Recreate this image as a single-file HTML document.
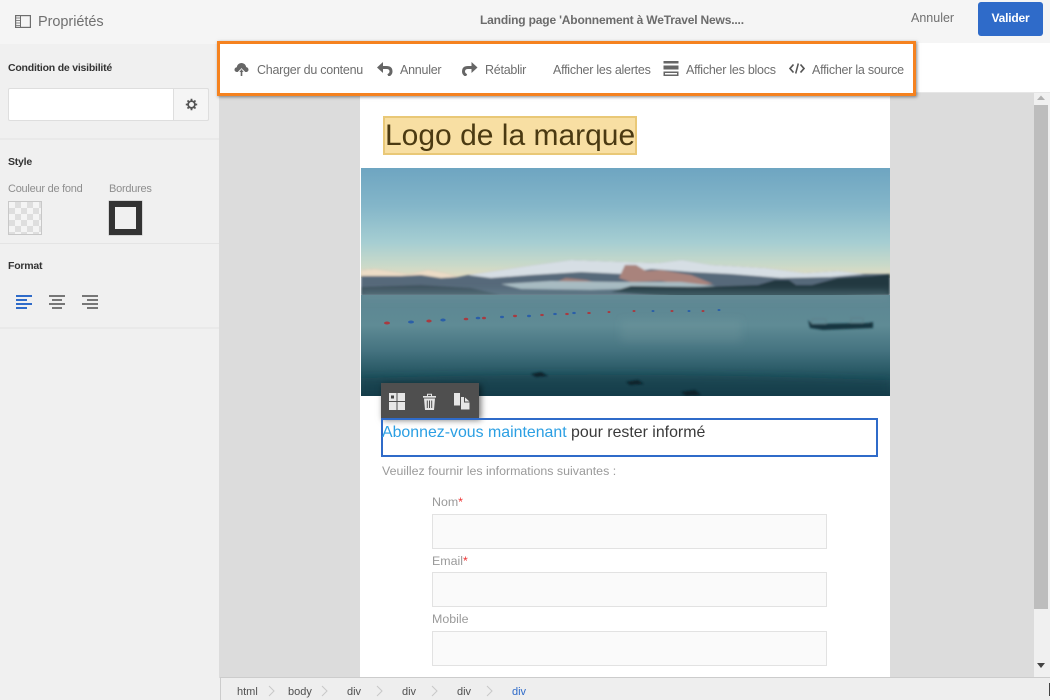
<!DOCTYPE html>
<html lang="fr"><head><meta charset="utf-8"><title>Propriétés</title>
<style>
*{box-sizing:border-box}
html,body{margin:0;padding:0;width:1050px;height:700px;overflow:hidden;background:#f0f0f0;font-family:"Liberation Sans",sans-serif}
.a{position:absolute;white-space:nowrap}
.t{font-size:12.5px;letter-spacing:-.25px;color:#6e6e6e;line-height:16px}
.b{font-weight:bold;font-size:10.5px;color:#333;letter-spacing:-.22px;line-height:14px}
.s{font-size:11px;color:#8e8e8e;letter-spacing:-.25px;line-height:14px}
.f{font-size:12.4px;color:#9a9a9a;line-height:16px}
.inp{position:absolute;left:432px;width:395px;height:35px;background:#fafafa;border:1px solid #e2e2e2}
.bc{position:absolute;top:685px;font-size:11px;color:#505050;line-height:14px}
.ch{position:absolute;top:685px;width:7px;height:12px}
svg{position:absolute;display:block}
</style></head><body>

<div class="a" style="left:0;top:0;width:1050px;height:44px;background:#f5f5f5"></div>
<div class="a" style="left:220px;top:43px;width:830px;height:50px;background:#fff;border-bottom:1px solid #e6e6e6"></div>
<div class="a" style="left:0;top:44px;width:219px;height:656px;background:#f0f0f0"></div>
<div class="a" style="left:219px;top:93px;width:831px;height:585px;background:#dcdcdc"></div>

<svg style="left:15px;top:15px" width="16" height="13" viewBox="0 0 16 13"><rect x=".6" y=".6" width="14.800" height="11.800" fill="none" stroke="#6e6e6e" stroke-width="1.200"/><path d="M1 3h4M1 5.500h4M1 8h4M1 10.500h4" stroke="#8a8a8a"/><path d="M5.500 1v11" stroke="#6e6e6e"/></svg>
<div class="a" style="left:38px;top:13px;font-size:14.5px;color:#707070;line-height:18px;letter-spacing:-.05px">Propriétés</div>
<div class="a" style="left:480px;top:12px;font-size:12px;font-weight:bold;color:#6b6b6b;line-height:16px;letter-spacing:-.17px">Landing page 'Abonnement à WeTravel News....</div>
<div class="a" style="left:911px;top:10px;font-size:12.5px;color:#707070;line-height:16px">Annuler</div>
<div class="a" style="left:978px;top:2px;width:65px;height:34px;background:#2f6bc9;border-radius:3px;color:#fff;font-size:12px;font-weight:bold;text-align:center;line-height:33px;letter-spacing:-.2px">Valider</div>

<div class="a b" style="left:8px;top:61px">Condition de visibilité</div>
<div class="a" style="left:8px;top:88px;width:201px;height:33px;background:#fff;border:1px solid #dedede;border-radius:2px"></div>
<div class="a" style="left:173px;top:88px;width:36px;height:33px;background:#f5f5f5;border:1px solid #dedede;border-radius:0 2px 2px 0"></div>
<svg style="left:185px;top:98px" width="13" height="13" viewBox="0 0 13 13"><circle cx="6.500" cy="6.500" r="3.400" fill="none" stroke="#555" stroke-width="1.800"/><g stroke="#555" stroke-width="1.800"><path d="M6.500 .8V3M6.500 10v2.200M.8 6.500H3M10 6.500h2.200M2.500 2.500L4 4M9 9l1.500 1.500M2.500 10.500L4 9M9 4l1.500-1.500"/></g></svg>
<div class="a" style="left:0;top:138px;width:219px;height:2px;background:#e9e9e9"></div>
<div class="a b" style="left:8px;top:155px">Style</div>
<div class="a s" style="left:8px;top:182px">Couleur de fond</div>
<div class="a s" style="left:109px;top:182px">Bordures</div>
<div class="a" style="left:8px;top:201px;width:34px;height:34px;border:1px solid #c8c8c8;background-color:#f4f4f4;background-image:conic-gradient(#dedede 25%,#f4f4f4 0 50%,#dedede 0 75%,#f4f4f4 0);background-size:12px 12px"></div>
<div class="a" style="left:109px;top:201px;width:33px;height:34px;border:6px solid #333;background:#f0f0f0;box-shadow:0 0 0 .5px #bbb"></div>
<div class="a" style="left:0;top:243px;width:219px;height:1px;background:#e4e4e4"></div>
<div class="a b" style="left:8px;top:259px">Format</div>
<svg style="left:16px;top:294px" width="85" height="15" viewBox="0 0 85 15"><g stroke="#2f6bc9" stroke-width="2"><path d="M0 2H16M0 6H11M0 10H16M0 14H11"/></g><g stroke="#777" stroke-width="2"><path d="M33 2H49M36 6H46M33 10H49M36 14H46M66 2H82M71 6H82M66 10H82M71 14H82"/></g></svg>
<div class="a" style="left:0;top:327px;width:219px;height:2px;background:#e9e9e9"></div>

<div class="a" style="left:360px;top:93px;width:530px;height:585px;background:#fff"></div>
<div class="a" style="left:383px;top:116px;width:254px;height:39px;background:#f8dfa3;border:2px solid #e9c877"></div>
<div class="a" style="left:385px;top:118px;font-size:30px;line-height:36px;color:#4b3a12">Logo de la marque</div>

<svg style="left:361px;top:168px" width="529" height="228" viewBox="0 0 529 228" preserveAspectRatio="none">
<defs>
<linearGradient id="sky" x1="0" y1="0" x2="0" y2="1"><stop offset="0" stop-color="#6ea5c1"/><stop offset=".35" stop-color="#84b6c9"/><stop offset=".68" stop-color="#a6ced2"/><stop offset=".88" stop-color="#c9d9c9"/><stop offset="1" stop-color="#e5dcc0"/></linearGradient>
<linearGradient id="wat" x1="0" y1="0" x2="0" y2="1"><stop offset="0" stop-color="#5d8692"/><stop offset=".3" stop-color="#5f8b95"/><stop offset=".55" stop-color="#457380"/><stop offset=".8" stop-color="#22535f"/><stop offset="1" stop-color="#103c4a"/></linearGradient>
<filter id="bl" x="-5%" y="-5%" width="110%" height="110%"><feGaussianBlur stdDeviation="1"/></filter>
<filter id="bl2" x="-5%" y="-30%" width="110%" height="160%"><feGaussianBlur stdDeviation="4"/></filter>
</defs>
<rect width="529" height="110" fill="url(#sky)"/>
<g filter="url(#bl)">
<path d="M0 102L14 101 34 104 48 106 67 102 84 105 97 109 107 107 173 97 210 92 264 94 297 95 321 92 351 97 404 100 444 105 477 103 504 106 529 106V128H0Z" fill="#56697a"/>
<path d="M0 102L14 101 34 104 48 106 67 102 84 105 97 109 80 110 60 107 40 108 0 108Z" fill="#ecdcc6"/>
<path d="M107 107L173 97 210 92 264 94 297 95 321 92 351 97 404 100 444 105 477 103 504 106 470 109 420 110 370 106 330 104 290 101 262 106 220 104 170 107 130 110Z" fill="#d6dee4"/>
<path d="M264 97L275 97 285 103 300 102 330 107 352 116 330 118 300 113 270 114 258 110Z" fill="#a9837c"/>
<path d="M205 110L225 112 245 117 210 117 195 114Z" fill="#a07e78"/>
<path d="M0 119L60 117 110 120 140 127H0Z" fill="#41525f"/>
<path d="M140 116L190 113 260 114 320 114 355 118 300 120 230 122 160 121Z" fill="#a9bcc3"/>
<path d="M250 124L270 118 340 119 397 117 414 112 428 112 435 117 451 117 477 110 510 108 529 106V127L440 130 330 130Z" fill="#24373f"/>
</g>
<rect y="127" width="529" height="101" fill="url(#wat)"/>
<g filter="url(#bl2)">
<rect x="0" y="124" width="529" height="7" fill="#6d8f98" opacity=".6"/>
<rect x="260" y="152" width="120" height="22" fill="#8fa8a8" opacity=".15"/>
<path d="M0 210Q260 202 529 212V228H0Z" fill="#0f3947" opacity=".45"/>
</g>
<g filter="url(#bl)">
<path d="M170 206l10-2 7 4-12 1ZM265 214l12-2 6 4-14 1ZM320 224l14-2 6 5-15 1Z" fill="#08212a"/>
<path d="M447 152l4 4 56-1 5-1 0 6-50 2-13-2Z" fill="#183540"/>
<path d="M451 151h14v5h-14ZM490 150h12v5h-12Z" fill="none" stroke="#5c7d86" stroke-width=".8"/>
</g>
<g>
<ellipse cx="26" cy="155" rx="3" ry="1.500" fill="#a83a40"/><ellipse cx="50" cy="154" rx="3" ry="1.500" fill="#2a5fa8"/><ellipse cx="68" cy="153" rx="2.700" ry="1.500" fill="#a83a40"/><ellipse cx="82" cy="152" rx="2.700" ry="1.500" fill="#2a5fa8"/><ellipse cx="105" cy="151" rx="2.300" ry="1.300" fill="#a83a40"/><ellipse cx="117" cy="150" rx="2.300" ry="1.300" fill="#2a5fa8"/><ellipse cx="123" cy="150" rx="2" ry="1.300" fill="#a83a40"/><ellipse cx="141" cy="149" rx="2" ry="1.200" fill="#2a5fa8"/><ellipse cx="154" cy="148" rx="2" ry="1.200" fill="#a83a40"/><ellipse cx="168" cy="148" rx="2" ry="1.200" fill="#2a5fa8"/><ellipse cx="181" cy="147" rx="1.800" ry="1.100" fill="#a83a40"/><ellipse cx="194" cy="146" rx="1.800" ry="1.100" fill="#2a5fa8"/><ellipse cx="206" cy="146" rx="1.800" ry="1.100" fill="#a83a40"/><ellipse cx="213" cy="145" rx="1.800" ry="1.100" fill="#2a5fa8"/><ellipse cx="228" cy="145" rx="1.800" ry="1" fill="#a83a40"/><ellipse cx="248" cy="144" rx="1.500" ry="1" fill="#a83a40"/><ellipse cx="273" cy="143" rx="1.500" ry="1" fill="#a83a40"/><ellipse cx="292" cy="143" rx="1.500" ry="1" fill="#2a5fa8"/><ellipse cx="311" cy="143" rx="1.500" ry="1" fill="#a83a40"/><ellipse cx="328" cy="143" rx="1.500" ry="1" fill="#2a5fa8"/><ellipse cx="342" cy="143" rx="1.500" ry="1" fill="#a83a40"/><ellipse cx="358" cy="142" rx="1.500" ry="1" fill="#2a5fa8"/>
</g>
</svg>

<div class="a" style="left:381px;top:383px;width:98px;height:35px;background:#4f4f4f;box-shadow:2px 2px 6px rgba(0,0,0,.55)"></div>
<svg style="left:389px;top:393px" width="16" height="17" viewBox="0 0 16 17"><path d="M0 0h7.500v8H0ZM8.500 0H16v8H8.500ZM0 9h7.500v8H0ZM8.500 9H16v8H8.500Z" fill="#e6e6e6"/><rect x="2" y="2.500" width="3" height="3" fill="#444"/></svg>
<svg style="left:422px;top:393px" width="15" height="17" viewBox="0 0 15 17"><path d="M1 3h13v1.600H1ZM5 3V.8h5V3h-1V1.800H6V3ZM2 5.500h11L12 17H3Z" fill="#e6e6e6"/><path d="M5.300 7.500v7.500M7.500 7.500v7.500M9.700 7.500v7.500" stroke="#4f4f4f"/></svg>
<svg style="left:454px;top:393px" width="16" height="17" viewBox="0 0 16 17"><path d="M0 0h6v12.500H0ZM7 4h3.500L15.500 8.500V16.500H7Z" fill="#e6e6e6"/><path d="M10.500 4v5h5" fill="none" stroke="#4f4f4f"/></svg>

<div class="a" style="left:381px;top:418px;width:497px;height:39px;border:2px solid #2f6bc9"></div>
<div class="a" style="left:382px;top:424px;font-size:15.9px;line-height:18px;color:#3a3a3a"><span style="color:#2b9fe3">Abonnez-vous maintenant</span> pour rester informé</div>
<div class="a f" style="left:382px;top:463px">Veuillez fournir les informations suivantes :</div>
<div class="a f" style="left:432px;top:494px">Nom<span style="color:#e33">*</span></div>
<div class="inp" style="top:514px"></div>
<div class="a f" style="left:432px;top:553px">Email<span style="color:#e33">*</span></div>
<div class="inp" style="top:572px"></div>
<div class="a f" style="left:432px;top:611px">Mobile</div>
<div class="inp" style="top:631px"></div>

<div class="a" style="left:1034px;top:93px;width:16px;height:585px;background:#f0f0f0"></div>
<svg style="left:1036px;top:94px" width="10" height="7" viewBox="0 0 10 7"><path d="M1 6L5 1.500 9 6Z" fill="#b0b0b0"/></svg>
<div class="a" style="left:1034px;top:105px;width:14px;height:504px;background:#bdbdbd"></div>
<svg style="left:1036px;top:662px" width="10" height="7" viewBox="0 0 10 7"><path d="M1 1H9L5 6Z" fill="#444"/></svg>

<div class="a" style="left:220px;top:677px;width:830px;height:23px;background:#eee;border-top:1px solid #ccc;border-left:1px solid #ccc"></div>
<div class="a" style="left:1049px;top:683px;width:1px;height:13px;background:#444"></div>
<div class="bc" style="left:237px">html</div>
<div class="bc" style="left:288px">body</div>
<div class="bc" style="left:347px">div</div>
<div class="bc" style="left:402px">div</div>
<div class="bc" style="left:457px">div</div>
<div class="bc" style="left:512px;color:#2f6bc9">div</div>
<svg class="ch" style="left:268px" viewBox="0 0 7 12"><path d="M1 1l5 5-5 5" fill="none" stroke="#c8c8c8"/></svg>
<svg class="ch" style="left:321px" viewBox="0 0 7 12"><path d="M1 1l5 5-5 5" fill="none" stroke="#c8c8c8"/></svg>
<svg class="ch" style="left:376px" viewBox="0 0 7 12"><path d="M1 1l5 5-5 5" fill="none" stroke="#c8c8c8"/></svg>
<svg class="ch" style="left:431px" viewBox="0 0 7 12"><path d="M1 1l5 5-5 5" fill="none" stroke="#c8c8c8"/></svg>
<svg class="ch" style="left:486px" viewBox="0 0 7 12"><path d="M1 1l5 5-5 5" fill="none" stroke="#c8c8c8"/></svg>

<div class="a" style="left:217px;top:41px;width:699px;height:55px;background:#fff;border:3px solid #f5821f;box-shadow:1px 1px 3px rgba(60,60,60,.6)"></div>
<svg style="left:234px;top:62px" width="15" height="14" viewBox="0 0 15 14"><path d="M3.500 10C1.500 10 .5 9 .5 7.700c0-1.300 1-2.300 2.300-2.400C3 3 5 1 7.500 1s4.300 1.800 4.700 4.100c1.400.2 2.300 1.200 2.300 2.600 0 1.300-1 2.300-2.500 2.300Z" fill="#666"/><path d="M4 10.500L7.500 7l3.500 3.500" fill="none" stroke="#fff" stroke-width="1.200"/><rect x="6.700" y="7.500" width="1.600" height="6.500" fill="#666"/></svg>
<div class="a t" style="left:257px;top:62px">Charger du contenu</div>
<svg style="left:377px;top:62px" width="16" height="14" viewBox="0 0 16 14"><path d="M0 5.500L6 0V11Z" fill="#666"/><path d="M5 5.500H9.500Q14 5.500 14 9.500Q14 12 11 13.500" fill="none" stroke="#666" stroke-width="3"/></svg>
<div class="a t" style="left:400px;top:62px">Annuler</div>
<svg style="left:462px;top:62px" width="16" height="14" viewBox="0 0 16 14"><path d="M15.500 5.500L9.500 0V11Z" fill="#666"/><path d="M10.500 5.500H6Q1.500 5.500 1.500 9.500Q1.500 12 4.500 13.500" fill="none" stroke="#666" stroke-width="3"/></svg>
<div class="a t" style="left:485px;top:62px">Rétablir</div>
<div class="a t" style="left:553px;top:62px">Afficher les alertes</div>
<svg style="left:663px;top:61px" width="16" height="15" viewBox="0 0 16 15"><path d="M.5 0H15.500V2.500H.5ZM.5 4.500H15.500V8.500H.5ZM.5 10.500H15.500V15H.5Z" fill="#666"/><rect x="2" y="12" width="12" height="1.500" fill="#fff"/></svg>
<div class="a t" style="left:686px;top:62px">Afficher les blocs</div>
<svg style="left:789px;top:63px" width="16" height="11" viewBox="0 0 16 11"><path d="M4.500 1.500L1 5.500l3.500 4M11.500 1.500l3.500 4-3.500 4" fill="none" stroke="#555" stroke-width="1.700"/><path d="M9.300.5L6.700 10.500" stroke="#555" stroke-width="1.500"/></svg>
<div class="a t" style="left:812px;top:62px">Afficher la source</div>

</body></html>
